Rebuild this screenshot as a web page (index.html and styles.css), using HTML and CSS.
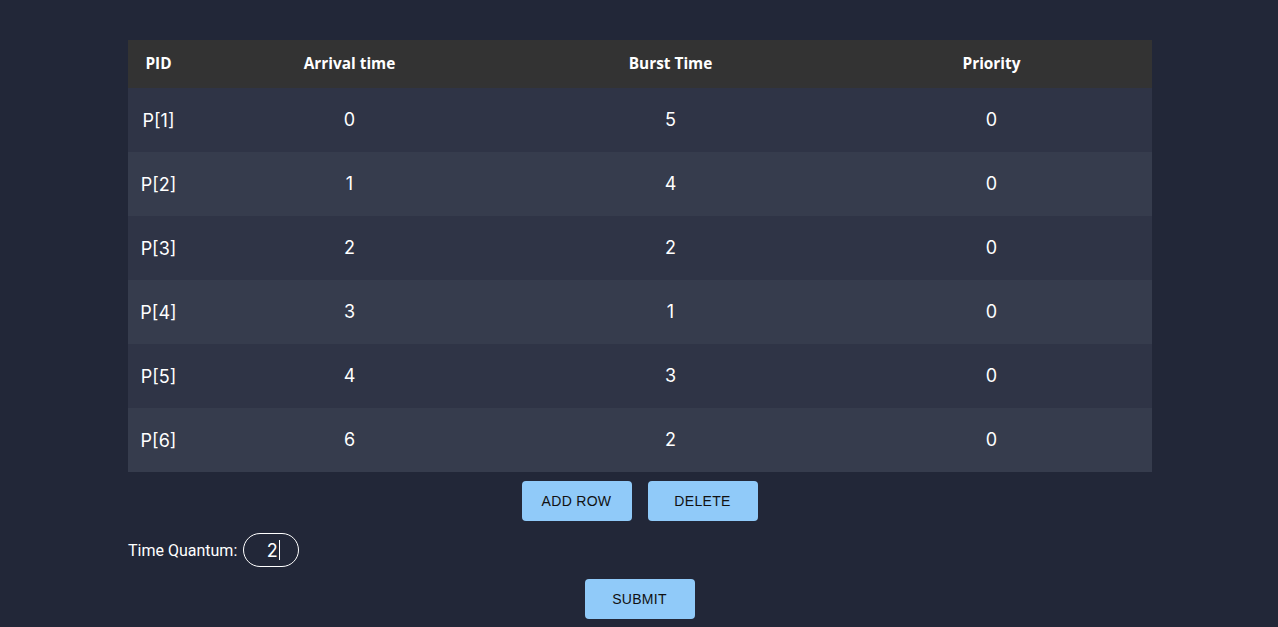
FILE: index.html
```html
<!DOCTYPE html>
<html>
<head>
<meta charset="utf-8">
<link rel="stylesheet" href="styles.css">
</head>
<body>
<div class="page">
  <table class="proc">
    <thead>
      <tr><th class="c-pid">PID</th><th>Arrival time</th><th>Burst Time</th><th>Priority</th></tr>
    </thead>
    <tbody>
      <tr><td class="c-pid">P[1]</td><td><input class="cell" value="0"></td><td><input class="cell" value="5"></td><td><input class="cell" value="0"></td></tr>
      <tr><td class="c-pid">P[2]</td><td><input class="cell" value="1"></td><td><input class="cell" value="4"></td><td><input class="cell" value="0"></td></tr>
      <tr><td class="c-pid">P[3]</td><td><input class="cell" value="2"></td><td><input class="cell" value="2"></td><td><input class="cell" value="0"></td></tr>
      <tr><td class="c-pid">P[4]</td><td><input class="cell" value="3"></td><td><input class="cell" value="1"></td><td><input class="cell" value="0"></td></tr>
      <tr><td class="c-pid">P[5]</td><td><input class="cell" value="4"></td><td><input class="cell" value="3"></td><td><input class="cell" value="0"></td></tr>
      <tr><td class="c-pid">P[6]</td><td><input class="cell" value="6"></td><td><input class="cell" value="2"></td><td><input class="cell" value="0"></td></tr>
    </tbody>
  </table>
  <div class="actions">
    <button class="btn">ADD ROW</button>
    <button class="btn">DELETE</button>
  </div>
  <div class="quantum">
    <label class="q-label">Time Quantum:</label>
    <div class="q-input">2<span class="caret"></span></div>
  </div>
  <div class="submit-row">
    <button class="btn">SUBMIT</button>
  </div>
</div>
</body>
</html>
```

FILE: styles.css
```css
html, body {
  margin: 0;
  padding: 0;
  background: #222738;
  height: 100%;
}
body {
  font-family: Roboto, "Liberation Sans", sans-serif;
  color: #ffffff;
}
.page {
  width: 1023px;
  margin: 0 0 0 128px;
  padding-top: 40px;
}
.proc {
  width: 1023px;
  border-collapse: collapse;
  table-layout: fixed;
}
.proc th {
  background: #333333;
  height: 48px;
  padding: 0 0 2px 0;
  box-sizing: border-box;
  font-family: "Open Sans", sans-serif;
  font-weight: 700;
  font-size: 15.4px;
  color: #ffffff;
  text-align: center;
  width: 321px;
}
.proc th.c-pid {
  width: 61px;
}
.proc tbody tr {
  height: 64px;
}
.proc td {
  padding: 0;
  text-align: center;
  font-family: Inter, Roboto, sans-serif;
  font-size: 18px;
  line-height: 22px;
}
.proc tbody tr:nth-child(odd) td {
  background: #2f3446;
}
.proc tbody tr:nth-child(even) td {
  background: #363c4d;
}
.proc td.c-pid {
  padding-top: 2px;
}
.cell {
  display: block;
  width: 100%;
  height: 22px;
  box-sizing: border-box;
  background: transparent;
  border: none;
  outline: none;
  color: #ffffff;
  font-family: Inter, Roboto, sans-serif;
  font-size: 18px;
  text-align: center;
  padding: 0;
  margin: -2px 0 0 0;
}
.actions {
  display: flex;
  justify-content: center;
  gap: 16px;
  margin-top: 9px;
}
.btn {
  width: 110px;
  height: 40px;
  border: none;
  border-radius: 4px;
  background: #90caf9;
  color: #111111;
  font-family: "Liberation Sans", Arial, sans-serif;
  font-size: 14px;
  letter-spacing: 0.3px;
  padding: 0;
}
.quantum {
  display: flex;
  align-items: center;
  margin-top: 12px;
  height: 34px;
}
.q-label {
  font-size: 16px;
  color: #ffffff;
  margin-right: 6px;
}
.q-input {
  width: 54px;
  height: 32px;
  border: 1px solid #ffffff;
  border-radius: 17px;
  font-family: Inter, Roboto, sans-serif;
  font-size: 18px;
  display: flex;
  align-items: center;
  justify-content: center;
  box-sizing: content-box;
  padding-left: 0;
}
.q-text {
  display: inline-block;
}
.caret {
  display: inline-block;
  width: 1px;
  height: 20px;
  background: #ffffff;
  margin-left: 1px;
  margin-right: -4px;
}
.submit-row {
  display: flex;
  justify-content: center;
  margin-top: 12px;
}
```
